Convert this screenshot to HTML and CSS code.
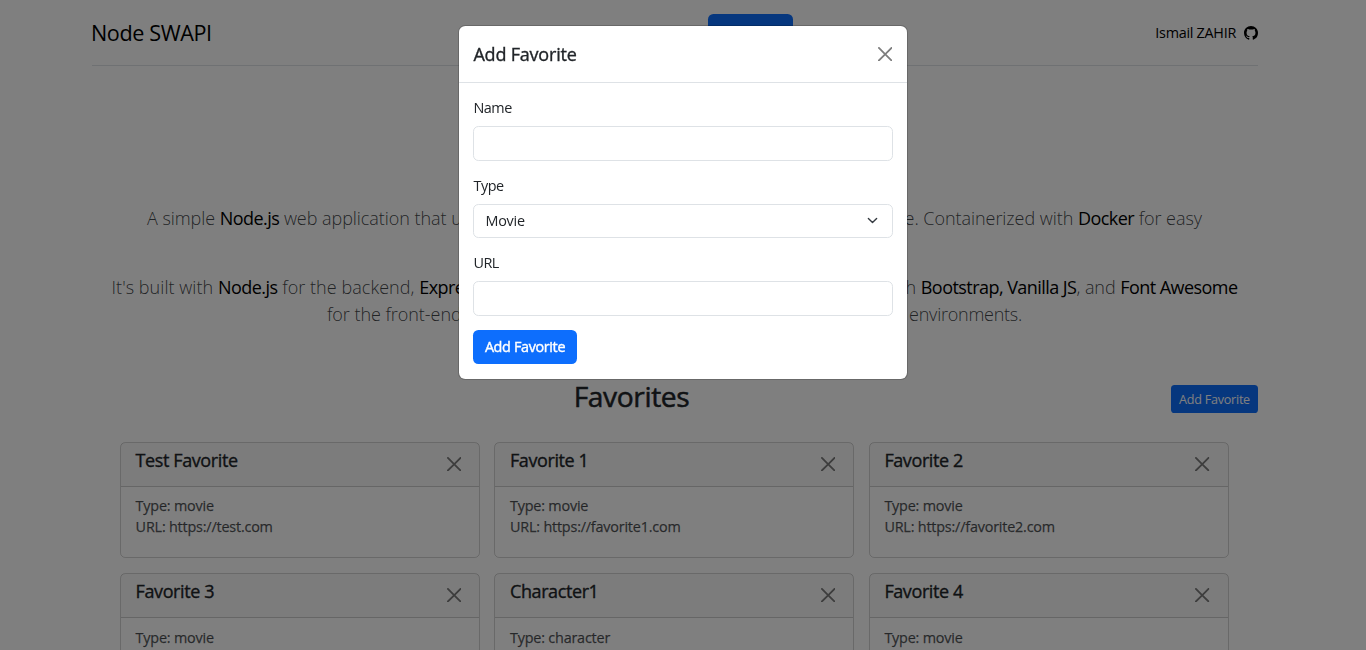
FILE: index.html
```html
<!DOCTYPE html>
<html lang="en">
<head>
<meta charset="utf-8">
<title>Node SWAPI</title>
<link rel="stylesheet" href="styles.css">
</head>
<body>
<svg class="sprite" aria-hidden="true">
  <symbol id="close" viewBox="0 0 16 16"><path d="M.293.293a1 1 0 0 1 1.414 0L8 6.586 14.293.293a1 1 0 1 1 1.414 1.414L9.414 8l6.293 6.293a1 1 0 0 1-1.414 1.414L8 9.414l-6.293 6.293a1 1 0 0 1-1.414-1.414L6.586 8 .293 1.707a1 1 0 0 1 0-1.414z"/></symbol>
</svg>
<div class="page">
  <header class="topbar">
    <a class="brand">Node SWAPI</a>
    <a class="nav-pill"></a>
    <a class="author"><span>Ismail ZAHIR</span>
      <svg class="github" viewBox="0 0 16 16"><path d="M8 0C3.58 0 0 3.58 0 8c0 3.54 2.29 6.53 5.47 7.59.4.07.55-.17.55-.38 0-.19-.01-.82-.01-1.49-2.01.37-2.53-.49-2.69-.94-.09-.23-.48-.94-.82-1.13-.28-.15-.68-.52-.01-.53.63-.01 1.08.58 1.23.82.72 1.21 1.87.87 2.33.66.07-.52.28-.87.51-1.07-1.78-.2-3.64-.89-3.64-3.95 0-.87.31-1.59.82-2.15-.08-.2-.36-1.02.08-2.12 0 0 .67-.21 2.2.82.64-.18 1.32-.27 2-.27s1.36.09 2 .27c1.53-1.04 2.2-.82 2.2-.82.44 1.1.16 1.92.08 2.12.51.56.82 1.27.82 2.15 0 3.07-1.87 3.75-3.65 3.95.29.25.54.73.54 1.48 0 1.07-.01 1.93-.01 2.2 0 .21.15.46.55.38A8.01 8.01 0 0 0 16 8c0-4.42-3.58-8-8-8z"/></svg>
    </a>
  </header>
  <section class="intro">
    <div class="line line-a"><span>A simple <b>Node.js</b> web application that u</span><span>e. Containerized with <b>Docker</b> for easy</span></div>
    <div class="line line-b"><span>It's built with <b>Node.js</b> for the backend, <b>Express</b></span><span>with <b>Bootstrap, Vanilla JS</b>, and <b>Font Awesome</b></span></div>
    <div class="line line-c"><span>for the front-end</span><span>environments.</span></div>
  </section>
  <div class="fav-head"><h3>Favorites</h3><button class="btn btn-sm">Add Favorite</button></div>
  <main class="cards">
    <article class="card"><div class="card-head"><h5>Test Favorite</h5><svg class="x"><use href="#close"/></svg></div><div class="card-body"><p>Type: movie</p><p>URL: https://test.com</p></div></article>
    <article class="card"><div class="card-head"><h5>Favorite 1</h5><svg class="x"><use href="#close"/></svg></div><div class="card-body"><p>Type: movie</p><p>URL: https://favorite1.com</p></div></article>
    <article class="card"><div class="card-head"><h5>Favorite 2</h5><svg class="x"><use href="#close"/></svg></div><div class="card-body"><p>Type: movie</p><p>URL: https://favorite2.com</p></div></article>
    <article class="card next-row"><div class="card-head"><h5>Favorite 3</h5><svg class="x"><use href="#close"/></svg></div><div class="card-body"><p>Type: movie</p></div></article>
    <article class="card next-row"><div class="card-head"><h5>Character1</h5><svg class="x"><use href="#close"/></svg></div><div class="card-body"><p>Type: character</p></div></article>
    <article class="card next-row"><div class="card-head"><h5>Favorite 4</h5><svg class="x"><use href="#close"/></svg></div><div class="card-body"><p>Type: movie</p></div></article>
  </main>
</div>
<div class="backdrop"></div>
<div class="modal">
  <div class="modal-head"><h5>Add Favorite</h5><svg class="x"><use href="#close"/></svg></div>
  <form class="modal-body">
    <label>Name</label><div class="field"></div>
    <label>Type</label><div class="field select"><span>Movie</span><svg class="chevron" viewBox="0 0 16 16"><path d="m2 5 6 6 6-6"/></svg></div>
    <label>URL</label><div class="field"></div>
    <button type="button" class="btn">Add Favorite</button>
  </form>
</div>
</body>
</html>
```
FILE: styles.css
```css
* { box-sizing: border-box; }
html { font-size: 14.4px; }
body { margin: 0; height: 650px; overflow: hidden; background: #fff; color: #212529; font: 14.4px/21.6px "Open Sans", "Noto Sans", sans-serif; }
h3, h5, p { margin: 0; }
.sprite { display: none; }
.page { width: 1166px; height: 650px; overflow: hidden; margin-left: 92px; }
.topbar { height: 66px; border-bottom: 1px solid #dee2e6; display: grid; grid-template-columns: 616px 85px 1fr; align-items: center; color: #000; }
.brand { font-size: 21.6px; letter-spacing: -.4px; margin-left: -1px; }
.nav-pill { height: 37px; border-radius: 5.4px; background: #0d6efd; }
.author { display: flex; justify-content: flex-end; align-items: center; gap: 8px; letter-spacing: -.28px; }
.github { width: 14px; height: 14px; }
.intro { height: 316px; padding-top: 139px; font-size: 18px; font-weight: 300; line-height: 27px; letter-spacing: -.05px; color: rgba(33, 37, 41, .85); }
.intro b { font-weight: 400; color: #000; letter-spacing: -.55px; }
.line { display: flex; justify-content: space-between; white-space: nowrap; }
.line-a { width: 1055px; margin: 0 0 42px 55px; }
.line-b { width: 1126px; margin-left: 19.5px; }
.line-b span:first-child { letter-spacing: .05px; }
.line-c { width: 695px; margin-left: 235px; }
.line-c span:last-child { letter-spacing: -.25px; }
.fav-head { display: flex; align-items: flex-start; height: 60px; padding-top: 3px; }
.fav-head h3 { flex: 1; margin-top: -6px; text-align: center; font-size: 28.2px; font-weight: 400; line-height: 34px; letter-spacing: -.4px; -webkit-text-stroke: .5px; }
.btn { border: 0; border-radius: 5.4px; background: #0d6efd; color: #fff; font: 400 14.4px/21.6px "Open Sans", sans-serif; letter-spacing: -.35px; -webkit-text-stroke: .4px; padding: 0; width: 104px; height: 34px; display: block; }
.btn-sm { width: 87px; height: 28px; border-radius: 3.6px; padding-top: 1px; font-size: 12.6px; letter-spacing: -.25px; -webkit-text-stroke: 0; }
.cards { display: grid; grid-template-columns: repeat(3, 360px); column-gap: 14.4px; row-gap: 15px; padding-left: 28px; }
.card { height: 116px; border: 1px solid rgba(0, 0, 0, .175); border-radius: 5.4px; }
.card-head { height: 44px; padding: 7px 18px 0 14.6px; display: flex; justify-content: space-between; background: rgba(33, 37, 41, .03); border-bottom: 1px solid rgba(0, 0, 0, .175); }
.card-head .x { margin-top: 7px; }
h5 { font-size: 18px; font-weight: 400; line-height: 21.6px; letter-spacing: -.4px; -webkit-text-stroke: .35px; }
.card-body { padding: 8px 14.6px; line-height: 21px; letter-spacing: -.2px; -webkit-text-stroke: .25px; color: rgba(33, 37, 41, .75); }
.next-row .card-body { padding-top: 9px; }
.x { width: 14.4px; height: 14.4px; opacity: .5; }
.backdrop { position: fixed; inset: 0; background: rgba(0, 0, 0, .5); }
.modal { position: absolute; left: 458px; top: 25px; width: 450px; height: 355px; border: 1px solid rgba(0, 0, 0, .175); border-radius: 7.2px; background: #fff; background-clip: padding-box; }
.modal-head { height: 57px; padding: 0 15px 0 14.4px; display: flex; justify-content: space-between; align-items: center; border-bottom: 1px solid #dee2e6; }
.modal-head h5 { letter-spacing: -.2px; padding-top: 1px; }
.modal-body { padding: 14.4px 14px; }
.modal-body label { display: block; margin-bottom: 7.2px; letter-spacing: -.5px; padding-left: .5px; }
.field { height: 34.8px; border: 1px solid #dee2e6; border-radius: 5.4px; margin-bottom: 14.2px; }
.select { display: flex; justify-content: space-between; align-items: center; padding: 0 14px 0 11.5px; height: 34px; letter-spacing: -.25px; }
.chevron { width: 11px; height: 11px; fill: none; stroke: #343a40; stroke-width: 2; stroke-linecap: round; stroke-linejoin: round; }
```
